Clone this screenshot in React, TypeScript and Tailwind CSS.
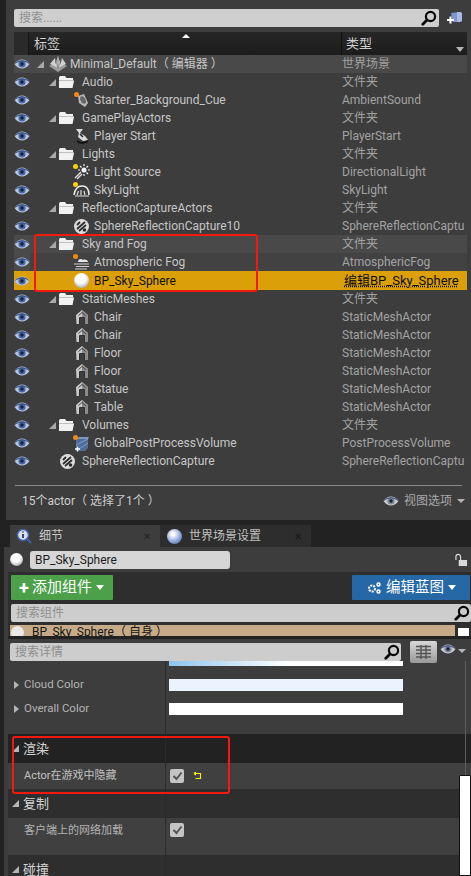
import React from "react";

const latin = "font-['Roboto','Noto_Sans_CJK_SC',sans-serif]";

type Kind = "world" | "folder" | "sound" | "start" | "light" | "sky" | "capture" | "fog" | "sphere" | "mesh" | "volume";

type Row = { name: string; type: string; level: number; kind: Kind; arrow?: boolean; tone?: "hover" | "dim" | "selected" };

const rows: Row[] = [
  { name: "Minimal_Default（ 编辑器 ）", type: "世界场景", level: 0, kind: "world", arrow: true, tone: "hover" },
  { name: "Audio", type: "文件夹", level: 1, kind: "folder", arrow: true },
  { name: "Starter_Background_Cue", type: "AmbientSound", level: 2, kind: "sound" },
  { name: "GamePlayActors", type: "文件夹", level: 1, kind: "folder", arrow: true },
  { name: "Player Start", type: "PlayerStart", level: 2, kind: "start" },
  { name: "Lights", type: "文件夹", level: 1, kind: "folder", arrow: true },
  { name: "Light Source", type: "DirectionalLight", level: 2, kind: "light" },
  { name: "SkyLight", type: "SkyLight", level: 2, kind: "sky" },
  { name: "ReflectionCaptureActors", type: "文件夹", level: 1, kind: "folder", arrow: true },
  { name: "SphereReflectionCapture10", type: "SphereReflectionCaptu", level: 2, kind: "capture" },
  { name: "Sky and Fog", type: "文件夹", level: 1, kind: "folder", arrow: true, tone: "hover" },
  { name: "Atmospheric Fog", type: "AtmosphericFog", level: 2, kind: "fog", tone: "dim" },
  { name: "BP_Sky_Sphere", type: "编辑BP_Sky_Sphere", level: 2, kind: "sphere", tone: "selected" },
  { name: "StaticMeshes", type: "文件夹", level: 1, kind: "folder", arrow: true },
  { name: "Chair", type: "StaticMeshActor", level: 2, kind: "mesh" },
  { name: "Chair", type: "StaticMeshActor", level: 2, kind: "mesh" },
  { name: "Floor", type: "StaticMeshActor", level: 2, kind: "mesh" },
  { name: "Floor", type: "StaticMeshActor", level: 2, kind: "mesh" },
  { name: "Statue", type: "StaticMeshActor", level: 2, kind: "mesh" },
  { name: "Table", type: "StaticMeshActor", level: 2, kind: "mesh" },
  { name: "Volumes", type: "文件夹", level: 1, kind: "folder", arrow: true },
  { name: "GlobalPostProcessVolume", type: "PostProcessVolume", level: 2, kind: "volume" },
  { name: "SphereReflectionCapture", type: "SphereReflectionCaptu", level: 1, kind: "capture" },
];

const Eye = ({ grey }: { grey?: boolean }) => (
  <svg width="16" height="10" viewBox="0 0 16 10">
    <path d="M0.5 5C3 1.500 5.500 0.500 8 0.500S13 1.500 15.500 5C13 8.500 10.500 9.500 8 9.500S3 8.500 0.500 5Z" fill={grey ? "#c9c9c9" : "#b9c6e0"} />
    <circle cx="8" cy="5" r="3.600" fill={grey ? "#7d8798" : "#4a6aa6"} />
    <circle cx="8" cy="5" r="1.700" fill="#16203a" />
    <path d="M1.500 4.500C4 1 12 1 14.500 4.500" fill="none" stroke="#27407a" strokeWidth="1" />
  </svg>
);

const Search = ({ size = 16 }: { size?: number }) => (
  <svg width={size} height={size} viewBox="0 0 16 16">
    <circle cx="9.500" cy="6.500" r="4.600" fill="none" stroke="#0a0a0a" strokeWidth="2.200" />
    <path d="M6 10 1.800 14.200" stroke="#0a0a0a" strokeWidth="2.800" strokeLinecap="round" />
  </svg>
);

const Dot = ({ color }: { color: string }) => (
  <span className="absolute left-0 top-0 h-[5px] w-[5px] rounded-full" style={{ background: color }} />
);

const Icon = ({ kind }: { kind: Kind }) => {
  if (kind === "folder")
    return (
      <svg width="17" height="14" viewBox="0 0 17 14">
        <path d="M1 2.500 2 1h5l1.500 2H15v3H16l-1.500 7H1Z" fill="#f1f1f1" />
        <path d="M1 5.500h15" stroke="#b4b4b4" strokeWidth="0.800" />
      </svg>
    );
  if (kind === "world")
    return (
      <svg width="20" height="18" viewBox="0 0 20 18">
        <path d="M1 11 10 17 19 11 15 9 10 12 5 9Z" fill="#9b9b9b" />
        <path d="M2 9 7 3 7.500 9 10 1 12.500 9 14 3 18 9 10 13Z" fill="#d0d0d0" />
        <path d="M10 1v12M7 3l3 10M14 3l-4 10" stroke="#777" strokeWidth="0.700" />
      </svg>
    );
  if (kind === "sphere")
    return <span className="h-[15px] w-[15px] rounded-full bg-[radial-gradient(circle_at_45%_35%,#ffffff_40%,#9a9a9a_85%,#3a3a3a_100%)]" />;
  if (kind === "mesh")
    return (
      <svg width="14" height="16" viewBox="0 0 14 16">
        <path d="M7 1 13 6 12.500 15H9.500V8.500H4.500V15H1.500L1 6Z" fill="#c9c9c9" />
        <path d="M7 1 13 6 12.500 15H9.500V8.500H7Z" fill="#8a8a8a" />
        <path d="M3.500 6.500 7 3.500 10.500 6.500" fill="none" stroke="#3a3a3a" strokeWidth="0.900" />
        <path d="M4.500 15V8.500H9.500V15" stroke="#262626" strokeWidth="0.900" fill="none" />
      </svg>
    );
  if (kind === "capture")
    return (
      <span className="relative block h-[15px] w-[15px] rounded-full bg-[#dcdcdc]">
        <svg width="15" height="15" viewBox="0 0 15 15" className="absolute inset-0">
          <path d="M3 10 11 3M5 12 12 6M3 6 6 3" stroke="#2b2b2b" strokeWidth="1.800" />
          <circle cx="10.500" cy="11" r="1.800" fill="#2b2b2b" />
        </svg>
      </span>
    );
  if (kind === "sound")
    return (
      <span className="relative block h-[16px] w-[16px]">
        <svg width="16" height="16" viewBox="0 0 16 16">
          <path d="M4 4 10 2 14 11 11 15 5 11Z" fill="#b9b9b9" />
          <ellipse cx="9" cy="8" rx="2.500" ry="4" fill="#666" transform="rotate(-25 9 8)" />
        </svg>
        <Dot color="#f08a12" />
      </span>
    );
  if (kind === "start")
    return (
      <svg width="16" height="16" viewBox="0 0 16 16">
        <path d="M2 1h7L6 5l5 3 3 4-5 1-5-4 1-4Z" fill="#dcdcdc" />
        <path d="M3 13c3 3 8 2 11 0" fill="none" stroke="#111" strokeWidth="1.800" />
        <path d="M6 6 9 9" stroke="#222" strokeWidth="1.500" />
      </svg>
    );
  if (kind === "light")
    return (
      <span className="relative block h-[16px] w-[17px]">
        <svg width="17" height="16" viewBox="0 0 17 16">
          <circle cx="11" cy="6" r="2.500" fill="#f2f2f2" />
          <path d="M11 0v2M11 10v2M5 6h2M15 6h2M7 2l1.500 1.500M15 2l-1.500 1.500M15 10l-1.500-1.500" stroke="#f2f2f2" strokeWidth="1.200" />
          <path d="M2 14 8 8M4 15 9 10" stroke="#e4e4e4" strokeWidth="1.300" />
        </svg>
        <Dot color="#f4d20e" />
      </span>
    );
  if (kind === "sky")
    return (
      <span className="relative block h-[16px] w-[17px]">
        <svg width="17" height="16" viewBox="0 0 17 16">
          <path d="M1 13C2 6 5 4 9 4s7 3 7 9" fill="none" stroke="#eee" strokeWidth="1.500" />
          <path d="M4 13 5.500 9M8 13V8M12 13 11 9M2 14h14" stroke="#ddd" strokeWidth="1.200" />
        </svg>
        <Dot color="#f4d20e" />
      </span>
    );
  if (kind === "fog")
    return (
      <span className="relative block h-[16px] w-[17px]">
        <svg width="17" height="16" viewBox="0 0 17 16">
          <path d="M5 8c0-3 3-4 5-2 2-1 5 0 5 2Z" fill="#e8e8e8" />
          <path d="M1 10h15M3 12.500h13M2 15h12" stroke="#cfcfcf" strokeWidth="1.200" />
        </svg>
        <Dot color="#f08a12" />
      </span>
    );
  return (
    <span className="relative block h-[17px] w-[17px]">
      <svg width="17" height="17" viewBox="0 0 17 17">
        <path d="M3 4h12v9l-3 3H3Z" fill="#4d6d9a" />
        <path d="M3 4 6 2h10l-1 2Z" fill="#7e98bd" />
        <path d="M3 10 15 4M6 14 15 8" stroke="#90a6c7" strokeWidth="0.800" />
        <path d="M2 14h5M4.500 11.500v5" stroke="#fff" strokeWidth="1.400" />
      </svg>
      <Dot color="#f08a12" />
    </span>
  );
};

const Tree = ({ row }: { row: Row }) => {
  const selected = row.tone === "selected";
  const bg = selected ? "bg-[#dba008]" : row.tone === "hover" ? "bg-[#494949]" : row.tone === "dim" ? "bg-[#424242]" : "";
  const gutter = selected ? "bg-[#dba008]" : row.tone === "hover" || row.tone === "dim" ? "bg-[#4a4a4a]" : "";
  const text = selected ? "text-[#0d0d0d]" : "text-[#c6c6c6]";
  const type = selected ? "ml-[3px] text-[13px] text-[#0d0d0d] underline decoration-dotted" : "ml-[1px] text-[12px] text-[#a2a2a2]";
  const folder = row.kind === "folder" || row.level === 1;
  return (
    <div className={`flex items-center ${selected ? "h-[19px]" : "h-[18px]"} ${bg}`}>
      <div className={`flex h-full w-[16px] items-center justify-center ${gutter}`}>
        <Eye />
      </div>
      <div className="flex h-full w-[311px] items-center" style={{ paddingLeft: row.level * 12 + 7 }}>
        <span className="flex w-[9px] shrink-0 items-center">
          {row.arrow && <span className="h-0 w-0 border-b-[7px] border-l-[7px] border-b-[#a9a9a9] border-l-transparent" />}
        </span>
        <span className={`flex w-[23px] shrink-0 items-center ${folder ? (row.kind === "folder" ? "justify-start" : "justify-start pl-[2px]") : "justify-center"}`}>
          <Icon kind={row.kind} />
        </span>
        <span className={`ml-[1px] whitespace-nowrap text-[12px] ${text}`}>{row.name}</span>
      </div>
      <span className={`whitespace-nowrap ${type}`}>{row.type}</span>
    </div>
  );
};

const Prop = ({ label, color }: { label: string; color: string }) => (
  <div className="flex h-[24px] items-center">
    <span className="flex w-[12px] justify-end pr-[1px]">
      <span className="h-0 w-0 border-y-[4px] border-l-[5px] border-y-transparent border-l-[#b5b5b5]" />
    </span>
    <span className="ml-[4px] w-[141px] whitespace-nowrap text-[11.500px] text-[#b4b4b4]">{label}</span>
    <span className="ml-[4px] h-[12px] w-[234px]" style={{ background: color }} />
  </div>
);

const Section = ({ title, dark }: { title: string; dark?: boolean }) => (
  <div className={`flex h-[29px] items-center ${dark ? "bg-[#222222]" : "bg-[#2e2e2e]"}`}>
    <span className="ml-[4px] h-0 w-0 border-b-[7px] border-l-[7px] border-b-[#b5b5b5] border-l-transparent" />
    <span className="ml-[4px] text-[13px] text-[#d4d4d4]">{title}</span>
  </div>
);

const Check = () => (
  <span className="flex h-[14px] w-[14px] items-center justify-center rounded-[2px] bg-[#c4c4c4]">
    <svg width="11" height="10" viewBox="0 0 11 10">
      <path d="M1.500 5 4.500 8 9.500 1.500" fill="none" stroke="#555" strokeWidth="2" />
    </svg>
  </span>
);

const Caret = () => <span className="h-0 w-0 border-x-[4px] border-t-[5px] border-x-transparent border-t-white" />;

export default function App() {
  return (
    <div className={`relative h-[876px] w-[471px] overflow-hidden bg-[#222222] ${latin}`}>
      {/* outliner */}
      <div className="ml-[6px] flex h-[520px] flex-col bg-[#3d3d3d]">
        <div className="flex items-center pl-[8px] pt-[9px]">
          <div className="flex h-[18px] w-[425px] items-center justify-between rounded-[2px] bg-[#cfcfcf] pl-[5px] pr-[2px]">
            <span className="text-[12px] text-[#8f8f8f]">搜索......</span>
            <Search />
          </div>
          <svg width="16" height="14" viewBox="0 0 16 14" className="ml-[8px]">
            <path d="M4 2 13 1 15 2V10L13 11H6Z" fill="#7f94d2" />
            <path d="M10 1h3l2 1v8l-2 1h-3Z" fill="#a9b8e4" />
            <path d="M0 9h7M3.500 5.500v7" stroke="#fff" strokeWidth="2" />
          </svg>
        </div>
        <div className="relative mt-[5px] ml-[8px] flex h-[23px] w-[453px] items-center bg-[linear-gradient(#262626,#1c1c1c)] text-[13px] text-[#cfcfcf]">
          <span className="h-full w-[15px] border-r border-[#151515] bg-[#2a2a2a]" />
          <span className="ml-[5px] w-[307px]">标签</span>
          <span className="border-l border-[#111111] pl-[4px] leading-[23px]">类型</span>
          <span className="absolute left-[168px] top-[2px] h-0 w-0 border-x-[4px] border-b-[4px] border-x-transparent border-b-white" />
          <span className="absolute right-[3px] bottom-[3px] h-0 w-0 border-x-[4px] border-t-[5px] border-x-transparent border-t-[#b5b5b5]" />
        </div>
        <div className="ml-[8px] w-[453px]">
          {rows.map((row, i) => (
            <Tree key={i} row={row} />
          ))}
        </div>
        <div className="mx-[9px] mt-[15px] h-px bg-[#8a8a8a]" />
        <div className="flex items-center justify-between pl-[16px] pr-[6px] pt-[6px] text-[12px]">
          <span className="text-[#cdcdcd]">15个actor（ 选择了1个 ）</span>
          <span className="flex items-center gap-[5px] text-[#a8a8a8]">
            <Eye grey />
            视图选项
            <span className="h-0 w-0 border-x-[4px] border-t-[4px] border-x-transparent border-t-[#b5b5b5]" />
          </span>
        </div>
      </div>

      {/* tabs */}
      <div className="ml-[10px] mt-[5px] flex h-[22px] text-[12px]">
        <div className="flex w-[150px] items-center bg-[#3d3d3d] pl-[6px] pr-[9px] text-[#c9c9c9]">
          <svg width="16" height="16" viewBox="0 0 16 16">
            <circle cx="7" cy="7" r="5.500" fill="#d9dfef" stroke="#4267a8" strokeWidth="1.500" />
            <path d="M11 11l4 4" stroke="#3f62a4" strokeWidth="1.800" />
            <path d="M7 3.500v1M7 6v4" stroke="#2c3a5e" strokeWidth="1.800" />
          </svg>
          <span className="ml-[7px] flex-1">细节</span>
          <span className="text-[10px] text-[#222222]">✕</span>
        </div>
        <div className="flex w-[151px] items-center bg-[#2d2d2d] pl-[7px] pr-[9px] text-[#c0c0c0]">
          <span className="h-[15px] w-[15px] rounded-full bg-[radial-gradient(circle_at_40%_35%,#ffffff_10%,#8da6d8_55%,#3d5694_100%)]" />
          <span className="ml-[7px] flex-1">世界场景设置</span>
          <span className="text-[10px] text-[#181818]">✕</span>
        </div>
      </div>

      {/* details */}
      <div className="ml-[4px] h-[329px] bg-[#3d3d3d]">
        <div className="flex h-[25px] items-center pl-[6px]">
          <span className="h-[13px] w-[13px] rounded-full bg-[radial-gradient(circle_at_45%_35%,#ffffff_40%,#9a9a9a_85%,#3a3a3a_100%)]" />
          <div className="ml-[7px] flex h-[18px] w-[200px] items-center rounded-[3px] bg-[#d6d6d6] pl-[5px] text-[12px] text-[#1e1e1e]">BP_Sky_Sphere</div>
          <svg width="13" height="14" viewBox="0 0 14 14" className="ml-auto mr-[3px]">
            <path d="M1 7V3.500a2.500 2.500 0 0 1 5 0V7" fill="none" stroke="#d8d8d8" strokeWidth="1.300" />
            <rect x="4" y="7" width="9" height="6.500" fill="#d8d8d8" />
          </svg>
        </div>
        <div className="ml-[4px] bg-[#2e2e2e]">
          <div className="flex h-[32px] items-start justify-between pl-[3px] pr-[1px] pt-[3px]">
            <div className="flex h-[25px] w-[102px] items-center rounded-[1px] bg-[#4ca04a] pl-[8px] text-[15px] text-white">
              <span className="w-[11px] text-[18px] font-bold leading-none">+</span>
              <span className="ml-[2px] mr-[4px]">添加组件</span>
              <Caret />
            </div>
            <div className="flex h-[25px] w-[118px] items-center rounded-[1px] bg-[#2668a6] pl-[15px] text-[14.500px] text-white">
              <svg width="14" height="12" viewBox="0 0 14 12">
                <circle cx="5" cy="6.500" r="3" fill="none" stroke="#fff" strokeWidth="2" strokeDasharray="2 1" />
                <circle cx="11.500" cy="2.500" r="1.500" fill="none" stroke="#fff" strokeWidth="1.500" />
                <circle cx="11.500" cy="9.500" r="1.500" fill="none" stroke="#fff" strokeWidth="1.500" />
              </svg>
              <span className="ml-[5px] mr-[4px]">编辑蓝图</span>
              <Caret />
            </div>
          </div>
          <div className="ml-[3px] flex h-[18px] items-center justify-between rounded-[2px] bg-[#cdcdcd] pl-[5px] pr-[1px] text-[12px] text-[#8f8f8f]">
            搜索组件
            <Search />
          </div>
          <div className="relative ml-[2px] mt-[3px] flex h-[11px] overflow-hidden">
            <div className="flex h-full w-[445px] items-start bg-[#c7ab88] pl-[1px]">
              <span className="mt-[1px] h-[13px] w-[13px] shrink-0 rounded-full bg-[#e9e9e9]" />
              <span className="ml-[8px] mt-[-1px] whitespace-nowrap text-[12px] leading-[16px] text-[#151515]">BP_Sky_Sphere（ 自身 ）</span>
            </div>
            <span className="ml-[3px] mt-[3px] h-[8px] w-[11px] bg-white" />
          </div>
        </div>
        <div className="ml-[4px] h-[3px] bg-[#222222]" />
        <div className="flex h-[22px] items-start pl-[6px] pt-[4px]">
          <div className="flex h-[18px] w-[391px] items-center justify-between rounded-[2px] bg-[#cdcdcd] pl-[5px] pr-[1px] text-[12px] text-[#8f8f8f]">
            搜索详情
            <Search />
          </div>
          <span className="ml-[9px] mt-[-2px] flex h-[22px] w-[27px] items-center justify-center rounded-[2px] bg-[linear-gradient(#d8d8d8,#999999)]">
            <svg width="15" height="14" viewBox="0 0 15 14">
              <path d="M0 1.500h15M0 5h15M0 8.500h15M0 12h15M5 0v14M10 0v14" stroke="#555" strokeWidth="1.400" />
            </svg>
          </span>
          <span className="ml-[3px] mt-[1px]">
            <Eye grey />
          </span>
          <span className="ml-[2px] mt-[6px] h-0 w-0 border-x-[4px] border-t-[4px] border-x-transparent border-t-[#b5b5b5]" />
        </div>

        {/* property list */}
        <div className="relative ml-[4px]">
          <div className="ml-[161px] h-[5px] w-[234px] bg-[linear-gradient(90deg,#8cc4f0,#ffffff_50%)]" />
          <div className="pt-[7px]">
            <Prop label="Cloud Color" color="#ebf3ff" />
            <Prop label="Overall Color" color="#ffffff" />
          </div>
          <div className="h-[13px]" />
          <Section title="渲染" dark />
          <div className="flex h-[26px] items-center bg-[#404040] text-[11px] text-[#c0c0c0]">
            <span className="ml-[16px] w-[146px]">Actor在游戏中隐藏</span>
            <Check />
            <svg width="9" height="8" viewBox="0 0 9 8" className="ml-[9px]">
              <path d="M1 1.500h6.500v5H2.500M1 1.500 3 0M1 1.500 3 3" fill="none" stroke="#f2ef1a" strokeWidth="1.200" />
            </svg>
          </div>
          <Section title="复制" />
          <div className="flex h-[37px] items-start bg-[#404040] pt-[5px] text-[11px] text-[#b4b4b4]">
            <span className="ml-[16px] w-[146px]">客户端上的网络加载</span>
            <Check />
          </div>
          <Section title="碰撞" />
          <span className="absolute left-[157px] top-0 h-full w-px bg-[#2a2a2a]" />
        </div>
      </div>

      {/* scrollbar */}
      <span className="absolute left-[465px] top-[661px] h-[114px] w-px bg-[#5e5e5e]" />
      <span className="absolute left-[459px] top-[775px] h-[101px] w-[12px] rounded-t-[1px] border border-[#111111] bg-white" />

      {/* red annotations */}
      <span className="absolute left-[34px] top-[234px] h-[58px] w-[224px] rounded-[3px] border-2 border-[#f4190f]" />
      <span className="absolute left-[12px] top-[736px] h-[58px] w-[218px] rounded-[3px] border-2 border-[#f4190f]" />
    </div>
  );
}
